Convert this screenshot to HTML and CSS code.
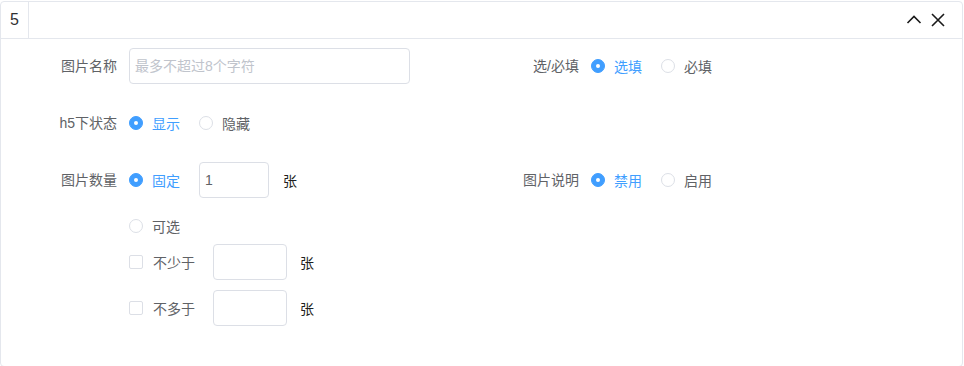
FILE: index.html
```html
<!DOCTYPE html>
<html>
<head>
  <meta charset="utf-8">
  <title>图片组件</title>
  <link rel="stylesheet" href="styles.css">
</head>
<body>
  <div class="panel">
    <div class="panel-head">
      <div class="panel-index">5</div>
      <div class="panel-title"></div>
      <div class="panel-tools">
        <svg class="tool-icon" width="16" height="16" viewBox="0 0 16 16">
          <path d="M1.5 11 L8 4.5 L14.5 11" fill="none" stroke="#1a1a1a" stroke-width="1.6"/>
        </svg>
        <svg class="tool-icon" width="16" height="16" viewBox="0 0 16 16">
          <path d="M2 2 L14 14 M14 2 L2 14" fill="none" stroke="#1a1a1a" stroke-width="1.6"/>
        </svg>
      </div>
    </div>

    <div class="panel-body">
      <div class="form-row">
        <div class="form-item">
          <label class="form-label">图片名称</label>
          <div class="form-content">
            <input class="text-input name-input" type="text" placeholder="最多不超过8个字符">
          </div>
        </div>
        <div class="form-item">
          <label class="form-label">选/必填</label>
          <div class="form-content">
            <span class="radio checked"><span class="radio-dot"></span>选填</span>
            <span class="radio"><span class="radio-dot"></span>必填</span>
          </div>
        </div>
      </div>

      <div class="form-row">
        <div class="form-item">
          <label class="form-label">h5下状态</label>
          <div class="form-content">
            <span class="radio checked"><span class="radio-dot"></span>显示</span>
            <span class="radio"><span class="radio-dot"></span>隐藏</span>
          </div>
        </div>
      </div>

      <div class="form-row">
        <div class="form-item">
          <label class="form-label">图片数量</label>
          <div class="form-stack">
            <div class="line">
              <span class="radio checked"><span class="radio-dot"></span>固定</span>
              <input class="text-input count-input" type="text" value="1">
              <span class="unit">张</span>
            </div>
            <div class="line line-option">
              <span class="radio"><span class="radio-dot"></span>可选</span>
            </div>
            <div class="line">
              <span class="checkbox"><span class="check-box"></span>不少于</span>
              <input class="text-input range-input" type="text">
              <span class="unit unit-range">张</span>
            </div>
            <div class="line line-option">
              <span class="checkbox"><span class="check-box"></span>不多于</span>
              <input class="text-input range-input" type="text">
              <span class="unit unit-range">张</span>
            </div>
          </div>
        </div>
        <div class="form-item">
          <label class="form-label">图片说明</label>
          <div class="form-content">
            <span class="radio checked"><span class="radio-dot"></span>禁用</span>
            <span class="radio"><span class="radio-dot"></span>启用</span>
          </div>
        </div>
      </div>
    </div>
  </div>
</body>
</html>
```

FILE: styles.css
```css
body {
  margin: 0;
  padding-top: 1px;
  font-family: "Liberation Sans", "Noto Sans CJK SC", sans-serif;
  font-size: 14px;
  color: #606266;
  background: #fff;
}

.panel {
  width: 961px;
  height: 364px;
  border: 1px solid #e4e7ed;
  border-radius: 4px;
}

.panel-head {
  display: flex;
  align-items: center;
  height: 36px;
  border-bottom: 1px solid #e4e7ed;
}

.panel-index {
  width: 27px;
  height: 36px;
  line-height: 36px;
  text-align: center;
  border-right: 1px solid #e4e7ed;
  color: #303133;
  font-size: 16px;
}

.panel-title {
  flex: 1;
}

.panel-tools {
  display: flex;
  align-items: center;
  gap: 8px;
  padding-right: 16px;
}

.tool-icon {
  display: block;
}

.panel-body {
  padding: 9px 0 0 16px;
}

.form-row {
  display: flex;
  margin-bottom: 21px;
}

.form-item {
  display: flex;
  align-items: flex-start;
  width: 462px;
}

.form-label {
  width: 100px;
  padding-right: 12px;
  text-align: right;
  line-height: 36px;
  white-space: nowrap;
}

.form-content,
.line {
  display: flex;
  align-items: center;
  height: 36px;
}

.form-stack {
  display: flex;
  flex-direction: column;
}

.line-option {
  margin-top: 10px;
}

.text-input {
  box-sizing: border-box;
  height: 36px;
  padding: 0 5px;
  border: 1px solid #dcdfe6;
  border-radius: 4px;
  font-family: inherit;
  font-size: 14px;
  color: #606266;
  outline: none;
}

.text-input::placeholder {
  color: #c0c4cc;
}

.name-input {
  width: 281px;
}

.count-input {
  width: 70px;
}

.range-input {
  width: 74px;
  margin-left: 18px;
}

.unit {
  margin-left: 14px;
  color: #1f1f1f;
}

.unit-range {
  margin-left: 13px;
}

.radio,
.checkbox {
  display: inline-flex;
  align-items: center;
  margin-right: 19px;
  white-space: nowrap;
}

.radio-dot {
  box-sizing: border-box;
  width: 14px;
  height: 14px;
  margin-right: 9px;
  border: 1px solid #dcdfe6;
  border-radius: 50%;
  background: #fff;
  position: relative;
}

.radio.checked {
  color: #409eff;
}

.radio.checked .radio-dot {
  border-color: #409eff;
  background: #409eff;
}

.radio.checked .radio-dot::after {
  content: '';
  position: absolute;
  left: 4px;
  top: 4px;
  width: 4px;
  height: 4px;
  border-radius: 50%;
  background: #fff;
}

.checkbox {
  margin-right: 0;
}

.check-box {
  box-sizing: border-box;
  width: 14px;
  height: 14px;
  margin-right: 10px;
  border: 1px solid #dcdfe6;
  border-radius: 2px;
  background: #fff;
}
```
